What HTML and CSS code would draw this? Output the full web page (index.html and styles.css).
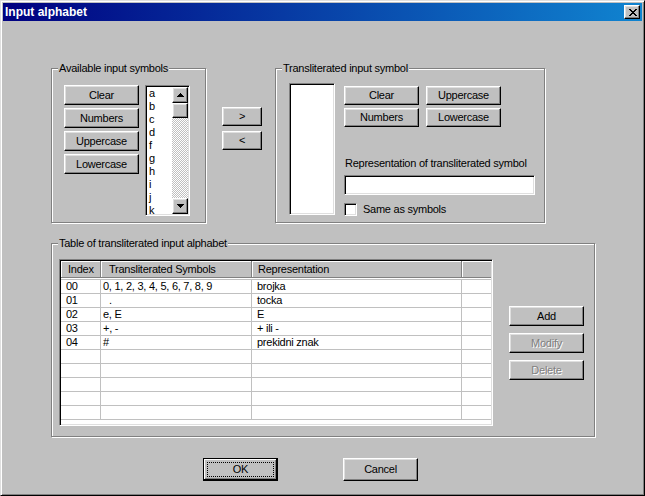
FILE: index.html
```html
<!DOCTYPE html>
<html>
<head>
<meta charset="utf-8">
<title>Input alphabet</title>
<link rel="stylesheet" href="styles.css">
</head>
<body>
<div class="window">
  <div class="titlebar">
    <span class="title">Input alphabet</span>
    <div class="closebtn raised">
      <svg width="8" height="7" viewBox="0 0 8 7" shape-rendering="crispEdges"><path fill="#000" d="M0 0h2v1h-2zM6 0h2v1h-2zM1 1h2v1h-2zM5 1h2v1h-2zM2 2h4v1h-4zM3 3h2v1h-2zM2 4h4v1h-4zM1 5h2v1h-2zM5 5h2v1h-2zM0 6h2v1h-2zM6 6h2v1h-2z"/></svg>
    </div>
  </div>
  <div class="client">
    <div class="toprow">
      <div class="group g1">
        <div class="glabel">Available input symbols</div>
        <div class="g1body">
          <div class="btncol">
            <div class="btn raised">Clear</div>
            <div class="btn raised">Numbers</div>
            <div class="btn raised">Uppercase</div>
            <div class="btn raised">Lowercase</div>
          </div>
          <div class="listbox sunken">
            <div class="items">
              <div>a</div><div>b</div><div>c</div><div>d</div><div>f</div>
              <div>g</div><div>h</div><div>i</div><div>j</div><div>k</div>
            </div>
            <div class="vscroll">
              <div class="sbtn raised"><svg width="7" height="4" viewBox="0 0 7 4" shape-rendering="crispEdges"><path fill="#000" d="M3 0h1v1h1v1h1v1h1v1H0V3h1V2h1V1h1z"/></svg></div>
              <div class="thumb raised"></div>
              <div class="track"></div>
              <div class="sbtn raised"><svg width="7" height="4" viewBox="0 0 7 4" shape-rendering="crispEdges"><path fill="#000" d="M0 0h7v1h-1v1h-1v1h-1v1h-1V3h-1V2h-1V1H0z"/></svg></div>
            </div>
          </div>
        </div>
      </div>

      <div class="arrows">
        <div class="btn raised arrow">&gt;</div>
        <div class="btn raised arrow">&lt;</div>
      </div>

      <div class="group g2">
        <div class="glabel">Transliterated input symbol</div>
        <div class="g2body">
          <div class="symbox sunken"></div>
          <div class="g2right">
            <div class="btngrid">
              <div class="btn raised h19">Clear</div>
              <div class="btn raised h19">Uppercase</div>
              <div class="btn raised h19">Numbers</div>
              <div class="btn raised h19">Lowercase</div>
            </div>
            <div class="replabel">Representation of transliterated symbol</div>
            <div class="edit sunken"></div>
            <div class="checkrow">
              <div class="checkbox sunken"></div>
              <span class="checklabel">Same as symbols</span>
            </div>
          </div>
        </div>
      </div>
    </div>

    <div class="group g3">
      <div class="glabel">Table of transliterated input alphabet</div>
      <div class="g3body">
        <div class="listview sunken">
          <div class="lvhead">
            <div class="c c1 h1">Index</div>
            <div class="c c2 h2">Transliterated Symbols</div>
            <div class="c c3 h3">Representation</div>
            <div class="c c4"></div>
          </div>
          <div class="lvrows">
            <div class="row"><div class="c c1">00</div><div class="c c2">0, 1, 2, 3, 4, 5, 6, 7, 8, 9</div><div class="c c3">brojka</div><div class="c c4"></div></div>
            <div class="row"><div class="c c1">01</div><div class="c c2"><span class="dot">.</span></div><div class="c c3">tocka</div><div class="c c4"></div></div>
            <div class="row"><div class="c c1">02</div><div class="c c2">e, E</div><div class="c c3">E</div><div class="c c4"></div></div>
            <div class="row"><div class="c c1">03</div><div class="c c2">+, -</div><div class="c c3">+ ili -</div><div class="c c4"></div></div>
            <div class="row"><div class="c c1">04</div><div class="c c2">#</div><div class="c c3">prekidni znak</div><div class="c c4"></div></div>
            <div class="row"><div class="c c1"></div><div class="c c2"></div><div class="c c3"></div><div class="c c4"></div></div>
            <div class="row"><div class="c c1"></div><div class="c c2"></div><div class="c c3"></div><div class="c c4"></div></div>
            <div class="row"><div class="c c1"></div><div class="c c2"></div><div class="c c3"></div><div class="c c4"></div></div>
            <div class="row"><div class="c c1"></div><div class="c c2"></div><div class="c c3"></div><div class="c c4"></div></div>
            <div class="row"><div class="c c1"></div><div class="c c2"></div><div class="c c3"></div><div class="c c4"></div></div>
          </div>
        </div>
        <div class="sidebtns">
          <div class="btn raised">Add</div>
          <div class="btn raised disabled">Modify</div>
          <div class="btn raised disabled">Delete</div>
        </div>
      </div>
    </div>

    <div class="bottombar">
      <div class="btn big default"><span class="focus">OK</span></div>
      <div class="btn big raised">Cancel</div>
    </div>
  </div>
</div>
</body>
</html>
```
FILE: styles.css
```css
* { box-sizing: border-box; }
html, body { margin: 0; padding: 0; }
body {
  width: 645px;
  height: 496px;
  overflow: hidden;
  background: #c0c0c0;
  font-family: "Liberation Sans", Arial, sans-serif;
  font-size: 11px;
  line-height: 13px;
  letter-spacing: -0.25px;
  color: #000;
}

.window {
  width: 645px;
  height: 496px;
  background: #c0c0c0;
  border: 1px solid;
  border-color: #dfdfdf #000 #000 #dfdfdf;
  box-shadow: inset 1px 1px #fff, inset -1px -1px #808080;
  padding: 2px;
}

.titlebar {
  height: 18px;
  display: flex;
  align-items: center;
  justify-content: space-between;
  background: linear-gradient(to right, #000080, #1084d0);
  padding: 0 2px 0 2px;
}
.title {
  color: #fff;
  font-weight: bold;
  font-size: 12px;
  letter-spacing: 0;
}
.closebtn {
  width: 16px;
  height: 14px;
  display: flex;
  align-items: center;
  justify-content: center;
  padding-left: 1px;
}
.closebtn svg { display: block; }

.raised {
  background: #c0c0c0;
  border: 1px solid;
  border-color: #fff #000 #000 #fff;
  box-shadow: inset -1px -1px #808080, inset 1px 1px #dfdfdf;
}
.sunken {
  background: #fff;
  border: 1px solid;
  border-color: #808080 #fff #fff #808080;
  box-shadow: inset 1px 1px #000, inset -1px -1px #dfdfdf;
  padding: 1px;
}

.btn {
  width: 75px;
  height: 20px;
  display: flex;
  align-items: center;
  justify-content: center;
  white-space: nowrap;
}
.btn.h19 { height: 19px; }
.disabled {
  color: #808080;
  text-shadow: 1px 1px 0 #fff;
}

.client {
  padding: 47px 0 0 48px;
}

.toprow {
  display: flex;
  align-items: flex-start;
}

.group {
  border: 1px solid #808080;
  box-shadow: 1px 1px 0 #fff, inset 1px 1px 0 #fff;
}
.glabel {
  width: fit-content;
  margin: -7px 0 0 6px;
  padding: 0 1px;
  background: #c0c0c0;
  white-space: nowrap;
}

/* group 1 */
.g1 { width: 155px; height: 155px; }
.g1body {
  display: flex;
  margin-top: 10px;
  padding-left: 12px;
}
.btncol {
  display: flex;
  flex-direction: column;
  gap: 3px;
}
.listbox {
  margin-left: 6px;
  width: 45px;
  height: 131px;
  display: flex;
}
.items {
  flex: 1;
  overflow: hidden;
  padding-left: 2px;
}
.vscroll {
  width: 16px;
  display: flex;
  flex-direction: column;
}
.sbtn {
  width: 16px;
  height: 16px;
  display: flex;
  align-items: center;
  justify-content: center;
  flex: none;
}
.sbtn svg { display: block; }
.thumb { width: 16px; height: 15px; flex: none; }
.track {
  flex: 1;
  background-color: #fff;
  background-image: repeating-conic-gradient(#c0c0c0 0 25%, #fff 0 50%);
  background-size: 2px 2px;
}

/* arrows */
.arrows {
  margin-left: 16px;
  margin-top: 39px;
  display: flex;
  flex-direction: column;
  gap: 5px;
}
.btn.arrow { width: 40px; height: 19px; }

/* group 2 */
.g2 { width: 270px; height: 155px; margin-left: 13px; }
.g2body {
  display: flex;
  margin-top: 8px;
  padding-left: 13px;
}
.symbox { width: 46px; height: 132px; }
.g2right {
  margin-left: 9px;
  display: flex;
  flex-direction: column;
}
.btngrid {
  margin-top: 3px;
  display: grid;
  grid-template-columns: 75px 75px;
  column-gap: 7px;
  row-gap: 3px;
}
.replabel {
  margin-top: 30px;
  padding-left: 1px;
  white-space: nowrap;
}
.edit {
  margin-top: 5px;
  width: 191px;
  height: 20px;
}
.checkrow {
  margin-top: 8px;
  display: flex;
  align-items: center;
  height: 13px;
}
.checkbox { width: 13px; height: 13px; }
.checklabel { margin-left: 6px; }

/* group 3 */
.g3 {
  width: 544px;
  height: 194px;
  margin-top: 20px;
}
.g3body {
  display: flex;
  margin-top: 9px;
  padding-left: 7px;
}
.listview {
  width: 434px;
  height: 167px;
  overflow: hidden;
}
.lvhead {
  display: flex;
  height: 17px;
  background: #c0c0c0;
}
.lvhead .c {
  border-right: 1px solid #808080;
  border-bottom: 1px solid #808080;
  box-shadow: inset 1px 1px #fff;
  padding-top: 2px;
}
.lvhead .c4 { border-right: none; }
.lvrows {
  padding-top: 1px;
  border-bottom: 1px solid #c0c0c0;
}
.row {
  display: flex;
  height: 14px;
  border-top: 1px solid #c0c0c0;
}
.c {
  flex: none;
  overflow: hidden;
  white-space: nowrap;
}
.row .c { border-right: 1px solid #c0c0c0; }
.row .c4 { border-right: none; }
.c1 { width: 40px; padding-left: 5px; }
.c2 { width: 151px; padding-left: 2px; }
.c3 { width: 210px; padding-left: 5px; }
.c4 { width: 29px; }
.lvhead .h1 { padding-left: 7px; }
.lvhead .h2 { padding-left: 8px; }
.lvhead .h3 { padding-left: 6px; }
.dot { padding-left: 6px; }

.sidebtns {
  margin-left: 16px;
  padding-top: 47px;
  display: flex;
  flex-direction: column;
  gap: 7px;
}

/* bottom buttons */
.bottombar {
  display: flex;
  margin-top: 21px;
  padding-left: 152px;
  gap: 65px;
}
.btn.big { height: 23px; }
.default {
  background: #c0c0c0;
  border: 1px solid #000;
  box-shadow: inset -1px -1px #000, inset 1px 1px #fff, inset -2px -2px #808080;
  padding: 3px;
}
.focus {
  flex: 1;
  align-self: stretch;
  display: flex;
  align-items: center;
  justify-content: center;
  border: 1px dotted #000;
}
```
